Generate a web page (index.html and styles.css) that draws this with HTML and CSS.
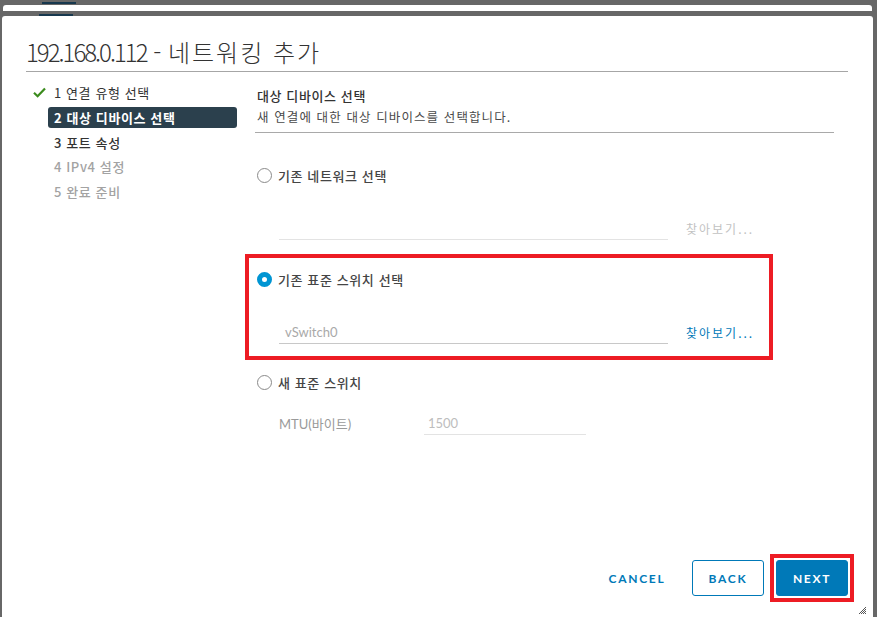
FILE: index.html
```html
<!DOCTYPE html>
<html lang="ko">
<head>
<meta charset="utf-8">
<title>192.168.0.112 - 네트워킹 추가</title>
<link rel="stylesheet" href="styles.css">
</head>
<body>
<div class="behind">
  <div class="peek-bar peek-bar-a"></div>
  <div class="peek-strip"></div>
  <div class="peek-bar peek-bar-b"></div>
</div>
<div class="dialog">
  <h1 class="title"><span class="title-ip">192.168.0.112</span> - <span class="title-ko">네트워킹 추가</span></h1>
  <div class="body">
    <ol class="steps">
      <li class="step done">
        <span class="step-icon">
          <svg width="13" height="11" viewBox="0 0 13 11"><path d="M1 5.8 L4.6 9.2 L12 1.4" fill="none" stroke="#3b8b1d" stroke-width="2.2"/></svg>
        </span>
        <span class="step-label">1 연결 유형 선택</span>
      </li>
      <li class="step active">
        <span class="step-icon"></span>
        <span class="step-label">2 대상 디바이스 선택</span>
      </li>
      <li class="step next">
        <span class="step-icon"></span>
        <span class="step-label">3 포트 속성</span>
      </li>
      <li class="step disabled">
        <span class="step-icon"></span>
        <span class="step-label">4 IPv4 설정</span>
      </li>
      <li class="step disabled">
        <span class="step-icon"></span>
        <span class="step-label">5 완료 준비</span>
      </li>
    </ol>
    <div class="content">
      <div class="content-head">
        <div class="content-title">대상 디바이스 선택</div>
        <div class="content-desc">새 연결에 대한 대상 디바이스를 선택합니다.</div>
      </div>

      <div class="option option-first">
        <label class="radio-row">
          <span class="radio"></span>
          <span class="radio-label">기존 네트워크 선택</span>
        </label>
        <div class="field-row field-row-1">
          <div class="field disabled-field"><span class="field-text"></span></div>
          <span class="browse browse-disabled">찾아보기...</span>
        </div>
      </div>

      <div class="option option-highlight">
        <label class="radio-row">
          <span class="radio checked"></span>
          <span class="radio-label">기존 표준 스위치 선택</span>
        </label>
        <div class="field-row field-row-2">
          <div class="field"><span class="field-text placeholder">vSwitch0</span></div>
          <span class="browse">찾아보기...</span>
        </div>
      </div>

      <div class="option option-third">
        <label class="radio-row">
          <span class="radio"></span>
          <span class="radio-label">새 표준 스위치</span>
        </label>
        <div class="mtu-row">
          <span class="mtu-label">MTU(바이트)</span>
          <div class="field mtu-field disabled-field"><span class="field-text mtu-value">1500</span></div>
        </div>
      </div>
    </div>
  </div>
  <div class="footer">
    <button class="btn btn-flat">CANCEL</button>
    <button class="btn btn-outline">BACK</button>
    <span class="annot"><button class="btn btn-primary">NEXT</button></span>
  </div>
  <svg class="resize" width="9" height="9" viewBox="0 0 9 9">
    <path d="M1 8 L8 1 M3 8 L8 3 M5 8 L8 5 M7 8 L8 7" stroke="#555" stroke-width="1"/>
  </svg>
</div>
</body>
</html>
```
FILE: styles.css
```css
* { box-sizing: border-box; }

html, body {
  margin: 0;
  padding: 0;
  height: 100%;
}

body {
  background: #676767;
  font-family: "Noto Sans CJK KR", "Noto Sans", sans-serif;
  color: #313131;
  overflow: hidden;
}

.behind {
  height: 16px;
  display: flex;
  flex-direction: column;
}

.peek-bar {
  height: 2px;
  width: 34px;
  background: #17384e;
}

.peek-bar-a { margin: 2px 0 0 42px; }

.peek-strip {
  height: 6px;
  margin: 1px 5px 0 3px;
  background: #fff;
  border-radius: 3px 3px 0 0;
}

.peek-bar-b { margin: 3px 0 0 39px; }

.dialog {
  position: relative;
  margin: 0 4px 0 2px;
  height: 601px;
  background: #fff;
  border-radius: 3px 3px 0 0;
  display: flex;
  flex-direction: column;
}

.title {
  margin: 0 25px 0 24px;
  padding: 20px 0 3px 0;
  font-size: 24px;
  line-height: 32px;
  font-weight: 300;
  color: #333;
  border-bottom: 1px solid #a6a6a6;
  white-space: nowrap;
}

.title-ip { letter-spacing: -2px; }
.title-ko { letter-spacing: 2px; }

.body {
  flex: 1;
  display: flex;
  padding-left: 24px;
}

.steps {
  list-style: none;
  margin: 10px 0 0 0;
  padding: 0;
  width: 211px;
}

.step {
  display: flex;
  align-items: center;
  height: 21px;
  margin-bottom: 3.75px;
  font-size: 13px;
  line-height: 21px;
  letter-spacing: 0.6px;
}

.step-icon {
  width: 22px;
  flex: none;
  display: flex;
  align-items: center;
  padding-left: 7px;
}

.step-label {
  flex: 1;
  height: 21px;
  padding-left: 6px;
  border-radius: 3px;
  white-space: nowrap;
}

.step.done .step-label { color: #333; font-weight: 400; }
.step.active .step-label { background: #2b404d; color: #fff; font-weight: 700; }
.step.next .step-label { color: #333; font-weight: 500; }
.step.disabled .step-label { color: #a3a3a3; font-weight: 500; }

.content {
  margin-left: 18px;
  width: 579px;
  padding-top: 14px;
}

.content-head {
  padding: 0 0 5px 2px;
  border-bottom: 1px solid #a9a9a9;
  letter-spacing: 0.6px;
}

.content-title {
  font-size: 13px;
  line-height: 20px;
  font-weight: 500;
  color: #333;
}

.content-desc {
  margin-top: 1px;
  font-size: 12.5px;
  line-height: 20px;
  letter-spacing: 1.1px;
  color: #4a4a4a;
}

.radio-row {
  display: flex;
  align-items: center;
  height: 20px;
}

.radio {
  width: 15px;
  height: 15px;
  border-radius: 50%;
  border: 1px solid #8a8a8a;
  background: #fff;
  flex: none;
}

.radio.checked {
  border: 5px solid #0095d3;
}

.radio-label {
  margin-left: 6px;
  font-size: 13px;
  font-weight: 500;
  letter-spacing: 0.6px;
  color: #454545;
  white-space: nowrap;
}

.option { padding-left: 2px; }

.option-first { margin-top: 32px; }

.field-row {
  display: flex;
  align-items: center;
  margin-left: 22px;
}

.field-row-1 { margin-top: 31px; }
.field-row-2 { margin-top: 31px; }

.field {
  width: 389px;
  height: 24px;
  border-bottom: 1px solid #c8c8c8;
  display: flex;
  align-items: center;
  padding-left: 6px;
}

.disabled-field { border-bottom-color: #e3e3e3; }

.field-text {
  font-family: "Lato", "Noto Sans CJK KR", sans-serif;
  font-size: 13px;
}

.placeholder { color: #a9a9a9; }

.browse {
  margin-left: 18px;
  font-size: 12px;
  letter-spacing: 2px;
  color: #0079b8;
  white-space: nowrap;
}

.browse-disabled { color: #c2c2c2; }

.option-highlight {
  margin: 18px 0 0 -6px;
  width: 520px;
  padding: 11px 0 12px 8px;
  outline: 4px solid #ed1c24;
}

.option-third { margin-top: 16px; }

.mtu-row {
  display: flex;
  align-items: center;
  margin: 19px 0 0 22px;
}

.mtu-label {
  width: 145px;
  font-family: "Lato", "Noto Sans CJK KR", sans-serif;
  font-size: 13px;
  color: #9a9a9a;
}

.mtu-field {
  width: 162px;
  padding-left: 4px;
}

.mtu-value { color: #bdbdbd; }

.footer {
  display: flex;
  justify-content: flex-end;
  align-items: center;
  gap: 12px;
  padding: 0 25px 21px 0;
}

.btn {
  height: 36px;
  width: 72px;
  border-radius: 3px;
  font-family: "Lato", "Noto Sans", sans-serif;
  font-size: 12px;
  font-weight: 700;
  letter-spacing: 1.7px;
  padding: 0;
  cursor: pointer;
}

.btn-flat {
  background: transparent;
  border: none;
  color: #0079b8;
  margin-right: 7px;
}

.btn-outline {
  background: #fff;
  border: 1px solid #0079b8;
  color: #0079b8;
}

.annot {
  display: flex;
  outline: 4px solid #ed1c24;
  outline-offset: 2px;
}

.btn-primary {
  background: #0079b8;
  border: 1px solid #0079b8;
  color: #fff;
}

.resize {
  position: absolute;
  right: 6px;
  bottom: 2px;
}
```
